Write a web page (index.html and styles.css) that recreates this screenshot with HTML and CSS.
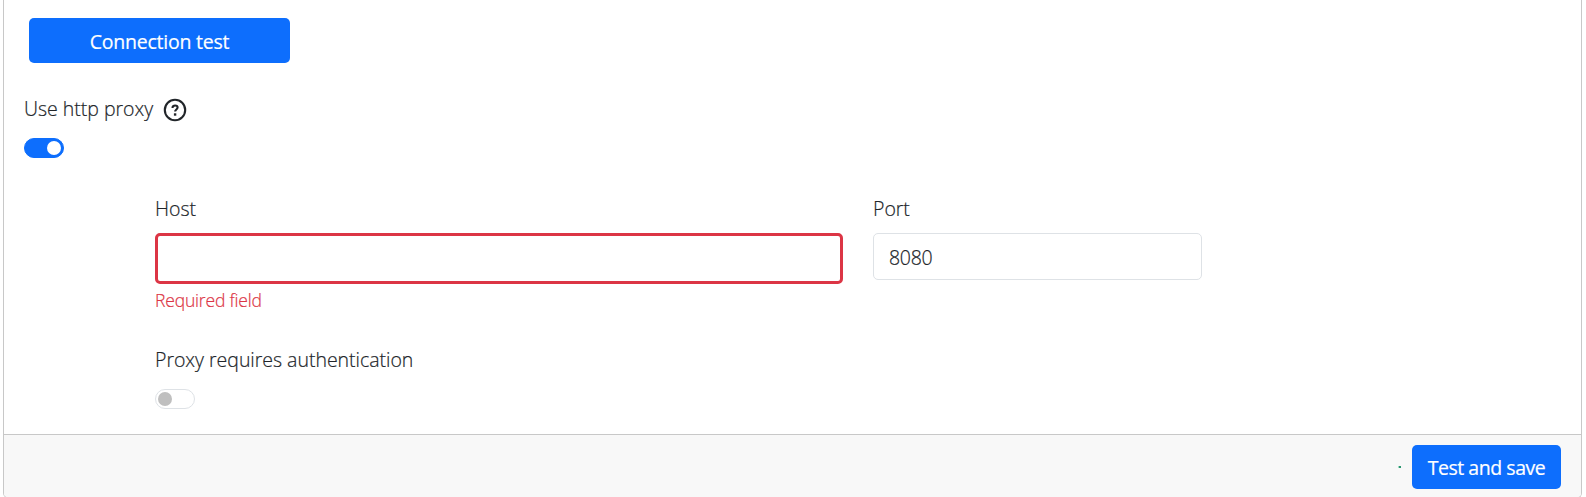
FILE: index.html
```
<!DOCTYPE html>
<html lang="en">
<head>
<meta charset="utf-8">
<title>Proxy settings</title>
<link rel="stylesheet" href="styles.css">
</head>
<body>
<main class="card">
  <div class="card-body">
    <button class="btn btn-test"><span>Connection test</span></button>
    <div class="label proxy-label"><span class="proxy-text">Use http proxy</span>
      <svg class="help" viewBox="0 0 24 24" fill="none" stroke="#212529" stroke-width="2.1"><circle cx="12" cy="12" r="10.2"/><path d="M9.5 9.9c0-1.5 1.1-2.4 2.6-2.4s2.5.8 2.5 2.1c0 1.8-2.5 2-2.5 3.9"/><path d="M12.1 15.3v2.4" stroke-width="2.4"/></svg>
    </div>
    <div class="switch on"></div>
    <div class="fields">
      <div class="field host">
        <label class="label" for="host"><span>Host</span></label>
        <input id="host" class="input invalid" type="text">
        <div class="error"><span>Required field</span></div>
      </div>
      <div class="field port">
        <label class="label" for="port"><span>Port</span></label>
        <input id="port" class="input" type="text" value="8080">
      </div>
    </div>
    <div class="auth">
      <div class="label"><span>Proxy requires authentication</span></div>
      <div class="switch"></div>
    </div>
  </div>
  <footer class="card-footer"><span class="dot"></span><button class="btn btn-save"><span>Test and save</span></button></footer>
</main>
</body>
</html>
```
FILE: styles.css
```
* { box-sizing: border-box; }
body { margin: 0; height: 497px; overflow: hidden; background: #fff; color: #212529; font: 300 19.5px/30px "Open Sans", "Noto Sans", sans-serif; letter-spacing: -0.02px; -webkit-text-stroke: 0.2px; }
.card { width: 1579px; height: 498px; margin-left: 3px; border: 1px solid #c8c8c8; border-top: 0; border-radius: 0 0 5px 5px; display: flex; flex-direction: column; overflow: hidden; }
.card-body { height: 434px; flex: none; padding: 18px 20px 0; }
.btn { display: flex; align-items: center; justify-content: center; padding: 2px 0 0; border: 0; border-radius: 5px; background: #0d6efd; color: #fff; font: inherit; font-weight: 400; }
.btn-test { width: 261px; height: 45px; margin-left: 5px; letter-spacing: -0.24px; }
.label { display: flex; align-items: center; height: 30px; white-space: nowrap; }
.proxy-label { margin-top: 31px; }
.proxy-text { width: 139px; }
.help { width: 24px; height: 24px; position: relative; top: 0.5px; }
.switch { width: 40px; height: 20px; margin-top: 14px; border: 1px solid #dee2e6; border-radius: 10px; padding: 2px; display: flex; }
.switch::before { content: ""; width: 14px; height: 14px; border-radius: 50%; background: #bfbfbf; }
.switch.on { background: #0d6efd; border-color: #0d6efd; justify-content: flex-end; }
.switch.on::before { background: #fff; }
.fields { display: flex; gap: 30px; margin: 36px 0 0 131px; height: 151px; }
.host { width: 688px; }
.port { width: 329px; }
.input { display: block; width: 100%; height: 47px; margin-top: 9px; padding: 1px 15px 0; border: 1px solid #dee2e6; border-radius: 5px; color: #212529; font: inherit; letter-spacing: -0.3px; }
.input.invalid { height: 51px; border: 3px solid #dc3545; }
.error { color: #dc3545; font-size: 17.5px; line-height: 26px; margin-top: 3px; letter-spacing: -0.18px; }
.auth { margin-left: 131px; }
.card-footer { flex: 1; background: #f8f8f8; border-top: 1px solid #c8c8c8; display: flex; align-items: flex-start; justify-content: flex-end; padding: 10px 20px 0; gap: 11px; }
.dot { width: 3px; height: 2px; margin-top: 21px; background: linear-gradient(90deg, #a3d9c4 33%, #2a9670 33%); }
.btn-save { width: 149px; height: 44px; letter-spacing: -0.46px; }
```
